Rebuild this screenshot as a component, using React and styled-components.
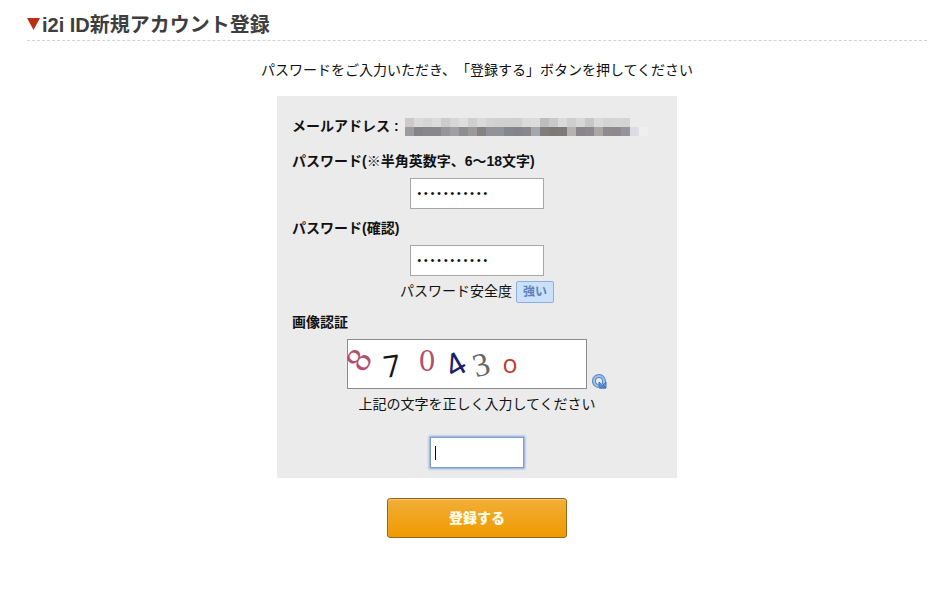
import React, { useState } from "react";
import styled, { createGlobalStyle } from "styled-components";

const GlobalStyle = createGlobalStyle`
  *, *::before, *::after { box-sizing: border-box; }
  body {
    margin: 0;
    background: #fff;
    color: #111;
    font-family: "Liberation Sans", "Noto Sans CJK JP", sans-serif;
    font-size: 14px;
    line-height: 20px;
    text-spacing-trim: space-all;
  }
`;

const Page = styled.main`
  padding: 11px 10px 40px 27px;
`;

const Heading = styled.h1`
  display: flex;
  align-items: center;
  gap: 2px;
  margin: 0;
  border-bottom: 1px dashed #d3d3d0;
  color: #3e3e3e;
  font-family: "Liberation Sans", "Noto Sans CJK JP", sans-serif;
  font-size: 20px;
  line-height: 29px;
`;

const Marker = styled.svg`
  flex: none;
  width: 13px;
  height: 12px;
  margin-bottom: 4px;
`;

const Form = styled.form`
  display: flex;
  flex-direction: column;
  align-items: center;
`;

const Lead = styled.p`
  margin: 19px 0 16px;
`;

const Panel = styled.div`
  display: flex;
  flex-direction: column;
  width: 100%;
  max-width: 400px;
  padding: 20px 15px 10px;
  background: #ebebeb;
`;

const EmailRow = styled.div`
  display: flex;
  gap: 6px;
  margin-bottom: 15px;
  font-weight: 700;
`;

const Mosaic = styled.svg`
  width: 243px;
  height: 18px;
  margin-top: 2px;
`;

const Field = styled.div`
  display: flex;
  flex-direction: column;
  align-items: center;
  margin-bottom: ${(p) => p.$gap}px;
`;

const Label = styled.label`
  align-self: flex-start;
  margin-bottom: 7px;
  font-weight: 700;
`;

const PasswordInput = styled.input`
  width: 134px;
  height: 31px;
  padding: 0 5px;
  border: 1px solid #a6a6a6;
  border-radius: 0;
  outline: none;
  background: #fff;
  color: #111;
  font-family: "Liberation Mono", monospace;
  font-size: 11px;
`;

const Strength = styled.div`
  display: flex;
  justify-content: center;
  gap: 4px;
  margin-bottom: 9px;
`;

const Badge = styled.strong`
  height: 22px;
  padding: 0 6px;
  border: 1px solid #8aaee0;
  border-radius: 2px;
  background: #cbe0fa;
  color: #5f83b8;
  font-size: 12px;
`;

const CaptchaRow = styled.div`
  display: flex;
  align-items: flex-end;
  gap: 5px;
`;

const CaptchaImage = styled.svg`
  width: 240px;
  height: 50px;
  border: 1px solid #8c8c8c;
  background: #fff;
  overflow: visible;
`;

const Reload = styled.button`
  display: flex;
  padding: 0;
  border: 0;
  background: none;
`;

const Hint = styled.p`
  margin: 5px 0 23px;
`;

const CaptchaInput = styled.input`
  width: 94px;
  height: 31px;
  padding: 0 5px;
  border: 1px solid #7f9dcb;
  border-radius: 0;
  outline: none;
  background: linear-gradient(#111, #111) 4px center / 1px 14px no-repeat #fff;
  box-shadow: 0 0 2px 1px #86a6dc;
  caret-color: transparent;
  font-size: 14px;
`;

const Submit = styled.button`
  width: 180px;
  height: 40px;
  margin-top: 20px;
  padding: 0 6px 2px;
  border: 1px solid #94651c;
  border-radius: 3px;
  background: linear-gradient(#f2ae38, #ef9a00);
  box-shadow: inset 0 1px 1px #f7c878;
  color: #fffbe6;
  font-family: "Noto Sans CJK JP", sans-serif;
  font-size: 14px;
  font-weight: 900;
`;

const MOSAIC_ROWS = [
  ["#cbc9ca", "#dadada", "#d5d5d5", "#dcdcdc", "#cccccc", "#d7d7d7", "#dedede", "#d0cfcf", "#dadada", "#d3d3d3", "#d0d0d0", "#d0d0d0", "#cfcfcf", "#dadada", "#dcdcdc", "#bdbdbd", "#c9c9c9", "#dadada", "#cecece", "#d7d7d7", "#c8c7c7", "#dadada", "#d4d4d4", "#d5d5d5", "#d4d4d4"],
  ["#9c9b9e", "#858489", "#88878c", "#88888c", "#969599", "#a09fa3", "#8e8d91", "#9b9999", "#858281", "#929398", "#919398", "#86868b", "#848489", "#87878d", "#a5a7ac", "#7f7d7e", "#7d7979", "#7d7b7a", "#b4b2b3", "#89868a", "#8c898d", "#aaa7a7", "#8d8b8e", "#8c8a8e", "#94949b", "#dddce2", "#efeff0"],
];

const DIGITS = [
  { text: "8", x: 11, y: 20, size: 31, angle: -58, color: "#b34d72", font: "DejaVu Serif" },
  { text: "7", x: 44, y: 26, size: 30, angle: -8, color: "#151515", font: "Open Sans" },
  { text: "0", x: 79, y: 21, size: 27, angle: 0, color: "#b0506f", font: "DejaVu Serif" },
  { text: "4", x: 107, y: 24, size: 33, angle: -30, color: "#18206c", font: "Liberation Sans" },
  { text: "3", x: 133, y: 24, size: 33, angle: -15, color: "#666", font: "Liberation Serif" },
  { text: "o", x: 162, y: 26, size: 25, angle: 0, color: "#b8402f", font: "Open Sans" },
];

function HiddenAddress() {
  return (
    <Mosaic viewBox="0 0 243 18" role="img" aria-label="メールアドレス" shapeRendering="crispEdges">
      {MOSAIC_ROWS.map((row, r) =>
        row.map((fill, c) => <rect key={`${r}-${c}`} x={c * 9} y={r * 9} width="9" height="9" fill={fill} />)
      )}
    </Mosaic>
  );
}

function Captcha() {
  return (
    <CaptchaImage viewBox="0 0 238 48" role="img" aria-label="画像認証">
      {DIGITS.map((d) => (
        <text
          key={d.x}
          x={d.x}
          y={d.y}
          dy={d.text === "o" ? "0.26em" : "0.36em"}
          fill={d.color}
          fontFamily={d.font}
          fontSize={d.size}
          textAnchor="middle"
          transform={`rotate(${d.angle} ${d.x} ${d.y})`}
        >
          {d.text}
        </text>
      ))}
    </CaptchaImage>
  );
}

function ReloadIcon() {
  return (
    <svg width="15" height="15" viewBox="0 0 15 15" aria-hidden="true">
      <path d="M6.5 12A5 5 0 1 1 12 7V10" fill="none" stroke="#5585c4" strokeWidth="4" />
      <path d="M6.5 12A5 5 0 1 1 12 7V10" fill="none" stroke="#9cc3ec" strokeWidth="2" />
      <path d="M7 8 14 14H7Z M14 8V14H8Z" fill="#5b93d8" stroke="#4277bd" />
    </svg>
  );
}

export default function App() {
  const [password, setPassword] = useState("abcdef12345");
  const [confirm, setConfirm] = useState("abcdef12345");
  const [code, setCode] = useState("");

  return (
    <>
      <GlobalStyle />
      <Page>
        <Heading>
          <Marker viewBox="0 0 13 12" aria-hidden="true">
            <path d="M0 0H13L6.5 12Z" fill="#bd2d12" />
          </Marker>
          i2i ID新規アカウント登録
        </Heading>
        <Form onSubmit={(e) => e.preventDefault()}>
          <Lead>パスワードをご入力いただき、「登録する」ボタンを押してください</Lead>
          <Panel>
            <EmailRow>
              <span>メールアドレス :</span>
              <HiddenAddress />
            </EmailRow>
            <Field $gap={9}>
              <Label htmlFor="password">パスワード(※半角英数字、6〜18文字)</Label>
              <PasswordInput id="password" type="password" value={password} onChange={(e) => setPassword(e.target.value)} />
            </Field>
            <Field $gap={5}>
              <Label htmlFor="confirm">パスワード(確認)</Label>
              <PasswordInput id="confirm" type="password" value={confirm} onChange={(e) => setConfirm(e.target.value)} />
            </Field>
            <Strength>
              <span>パスワード安全度</span>
              <Badge>強い</Badge>
            </Strength>
            <Field $gap={0}>
              <Label htmlFor="code">画像認証</Label>
              <CaptchaRow>
                <Captcha />
                <Reload type="button" aria-label="画像を更新">
                  <ReloadIcon />
                </Reload>
              </CaptchaRow>
              <Hint>上記の文字を正しく入力してください</Hint>
              <CaptchaInput id="code" type="text" value={code} onChange={(e) => setCode(e.target.value)} />
            </Field>
          </Panel>
          <Submit type="submit">登録する</Submit>
        </Form>
      </Page>
    </>
  );
}
